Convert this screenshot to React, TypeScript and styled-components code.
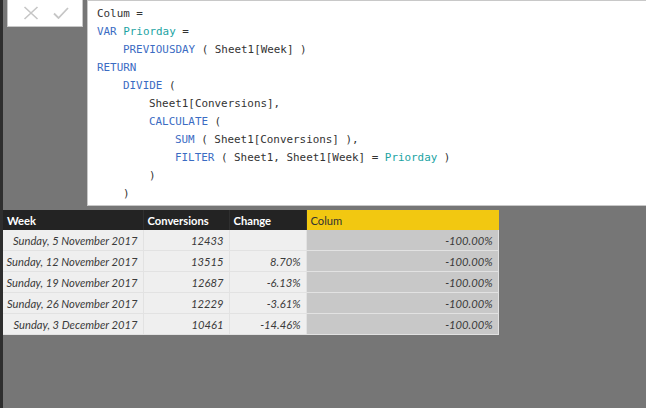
import styled, { createGlobalStyle } from 'styled-components';

const GlobalStyle = createGlobalStyle`
  html, body {
    margin: 0;
    padding: 0;
    background: #767676;
    height: 100%;
  }
  #root {
    min-height: 100%;
  }
`;

const Page = styled.div`
  width: 646px;
  height: 408px;
  box-sizing: border-box;
  border-left: 3px solid #2e2e2e;
  background: #767676;
  overflow: hidden;
`;

const TopBar = styled.div`
  display: flex;
  align-items: flex-start;
`;

const ActionBox = styled.div`
  margin-left: 4px;
  width: 76px;
  height: 27px;
  box-sizing: border-box;
  background: #ffffff;
  border: 1px solid #c8c8c8;
  border-top: none;
  display: flex;
  align-items: center;
  justify-content: space-around;
  padding: 0 6px 0 8px;
`;

const ActionButton = styled.button`
  all: unset;
  display: flex;
  width: 18px;
  height: 18px;
  align-items: center;
  justify-content: center;
`;

const Editor = styled.div`
  margin-left: 4px;
  flex: 1;
  height: 206px;
  box-sizing: border-box;
  background: #ffffff;
  border: 1px solid #c8c8c8;
  border-right: none;
  padding: 4px 10px 0 9px;
  font-family: 'DejaVu Sans Mono', 'Liberation Mono', monospace;
  font-size: 10.9px;
  line-height: 18px;
  color: #333333;
  white-space: pre;
`;

const CodeLine = styled.div<{ $indent?: number }>`
  padding-left: ${(p) => (p.$indent ?? 0) * 26}px;
`;

const Kw = styled.span`
  color: #3b6cc3;
`;

const Var = styled.span`
  color: #1aa3a3;
`;

const Grid = styled.table`
  margin-top: 4px;
  width: 495px;
  border-collapse: collapse;
  table-layout: fixed;
  font-family: 'Lato', 'Open Sans', sans-serif;
  font-size: 11.2px;
`;

const Head = styled.th<{ $accent?: boolean }>`
  height: 20px;
  padding: 0 4px;
  text-align: left;
  background: ${(p) => (p.$accent ? '#f2c811' : '#232323')};
  color: ${(p) => (p.$accent ? '#333333' : '#ffffff')};
  font-weight: ${(p) => (p.$accent ? 400 : 700)};
  border-right: 1px solid ${(p) => (p.$accent ? '#f2c811' : '#2f2f2f')};
  overflow: hidden;
  white-space: nowrap;
`;

const Cell = styled.td<{ $accent?: boolean }>`
  height: 20px;
  padding: 0 5px 0 2px;
  text-align: right;
  font-style: italic;
  color: #3a3a3a;
  background: ${(p) => (p.$accent ? '#c8c8c8' : '#efefef')};
  border-right: 1px solid #e2e2e2;
  border-bottom: 1px solid #e2e2e2;
  white-space: nowrap;
  overflow: hidden;
`;

const columns = [
  { title: 'Week', width: 140 },
  { title: 'Conversions', width: 86 },
  { title: 'Change', width: 77 },
  { title: 'Colum', width: 192, accent: true },
];

const rows = [
  ['Sunday, 5 November 2017', '12433', '', '-100.00%'],
  ['Sunday, 12 November 2017', '13515', '8.70%', '-100.00%'],
  ['Sunday, 19 November 2017', '12687', '-6.13%', '-100.00%'],
  ['Sunday, 26 November 2017', '12229', '-3.61%', '-100.00%'],
  ['Sunday, 3 December 2017', '10461', '-14.46%', '-100.00%'],
];

const CrossIcon = () => (
  <svg width="16" height="14" viewBox="0 0 16 14">
    <path d="M1.5 1 L14.5 13 M14.5 1 L1.5 13" stroke="#c6c6c6" strokeWidth="1.6" fill="none" />
  </svg>
);

const CheckIcon = () => (
  <svg width="16" height="12" viewBox="0 0 16 12">
    <path d="M1 6.5 L5.5 11 L15 1" stroke="#c6c6c6" strokeWidth="1.8" fill="none" />
  </svg>
);

const App = () => {
  return (
    <>
      <GlobalStyle />
      <Page>
        <TopBar>
          <ActionBox>
            <ActionButton>
              <CrossIcon />
            </ActionButton>
            <ActionButton>
              <CheckIcon />
            </ActionButton>
          </ActionBox>
          <Editor>
            <CodeLine>Colum =</CodeLine>
            <CodeLine>
              <Kw>VAR</Kw> <Var>Priorday</Var> =
            </CodeLine>
            <CodeLine $indent={1}>
              <Kw>PREVIOUSDAY</Kw> ( Sheet1[Week] )
            </CodeLine>
            <CodeLine>
              <Kw>RETURN</Kw>
            </CodeLine>
            <CodeLine $indent={1}>
              <Kw>DIVIDE</Kw> (
            </CodeLine>
            <CodeLine $indent={2}>Sheet1[Conversions],</CodeLine>
            <CodeLine $indent={2}>
              <Kw>CALCULATE</Kw> (
            </CodeLine>
            <CodeLine $indent={3}>
              <Kw>SUM</Kw> ( Sheet1[Conversions] ),
            </CodeLine>
            <CodeLine $indent={3}>
              <Kw>FILTER</Kw> ( Sheet1, Sheet1[Week] = <Var>Priorday</Var> )
            </CodeLine>
            <CodeLine $indent={2}>)</CodeLine>
            <CodeLine $indent={1}>)</CodeLine>
          </Editor>
        </TopBar>
        <Grid>
          <colgroup>
            {columns.map((c) => (
              <col key={c.title} style={{ width: c.width }} />
            ))}
          </colgroup>
          <thead>
            <tr>
              {columns.map((c) => (
                <Head key={c.title} $accent={c.accent}>
                  {c.title}
                </Head>
              ))}
            </tr>
          </thead>
          <tbody>
            {rows.map((r) => (
              <tr key={r[0]}>
                <Cell>{r[0]}</Cell>
                <Cell>{r[1]}</Cell>
                <Cell>{r[2]}</Cell>
                <Cell $accent>{r[3]}</Cell>
              </tr>
            ))}
          </tbody>
        </Grid>
      </Page>
    </>
  );
};

export default App;
